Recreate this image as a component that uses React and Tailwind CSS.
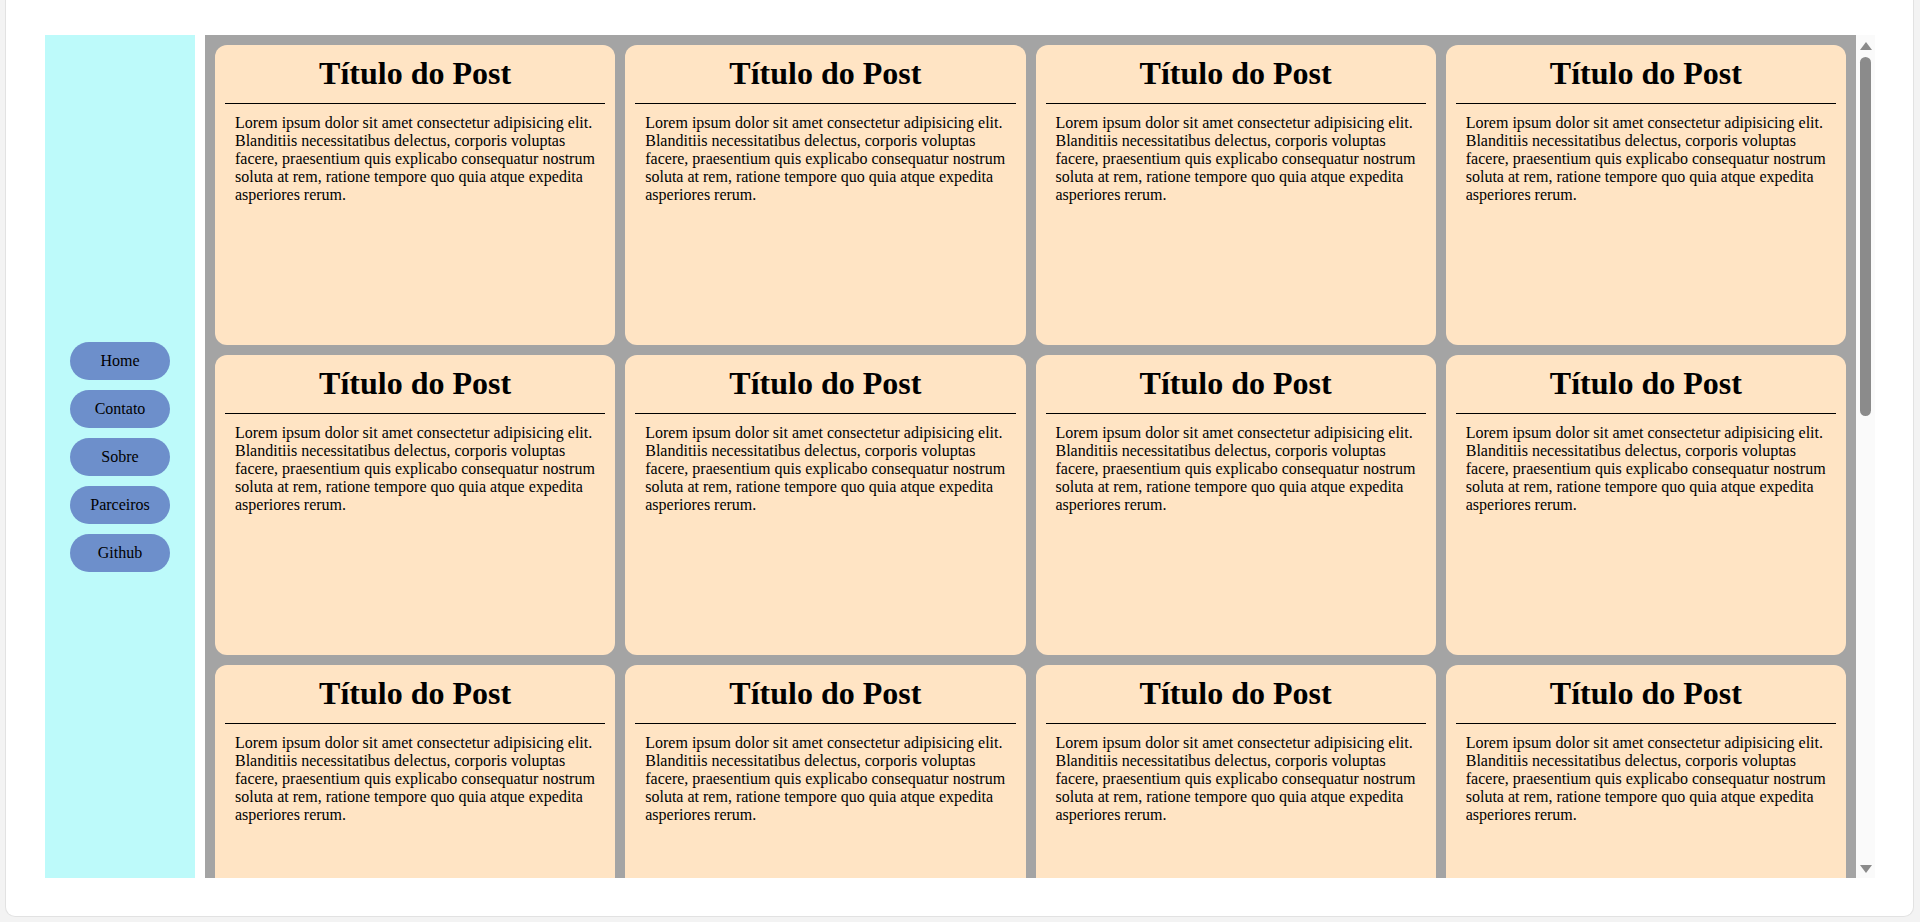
const links = ["Home", "Contato", "Sobre", "Parceiros", "Github"];

// only the rows that show through the scroll window
const posts = Array.from({ length: 12 }, (_, i) => ({
    id: i,
    title: "Título do Post",
    body: "Lorem ipsum dolor sit amet consectetur adipisicing elit. Blanditiis necessitatibus delectus, corporis voluptas facere, praesentium quis explicabo consequatur nostrum soluta at rem, ratione tempore quo quia atque expedita asperiores rerum.",
}));

const Sidebar = () => (
    <aside className="w-[150px] h-[843px] shrink-0 bg-[#bdfafa] flex flex-col items-center justify-center gap-[10px]">
        {links.map((link) => (
            <a key={link} href="#"
                className="w-[100px] h-[38px] rounded-full bg-[#6d8fcb] text-black text-[16px] flex items-center justify-center">
                {link}
            </a>
        ))}
    </aside>
);

const PostCard = ({ post }) => (
    <article className="bg-[#ffe4c4] rounded-[12px] p-[10px] text-black">
        <h1 className="text-[32px] font-bold text-center leading-[normal] pb-[11px] border-b border-black">
            {post.title}
        </h1>
        <p className="mt-[10px] px-[10px] text-[16px] leading-[normal]">{post.body}</p>
    </article>
);

// fake scrollbar, same look as the one in the screenshot
const ScrollBar = () => (
    <div className="w-[19px] shrink-0 bg-[#fafafa] flex flex-col items-center pt-[7px] pb-[5px]">
        <svg width="12" height="8" viewBox="0 0 12 8">
            <polygon points="6,0 12,8 0,8" fill="#8b8b8b" />
        </svg>
        <div className="mt-[7px] w-[11px] h-[359px] rounded-full bg-[#8b8b8b]" />
        <div className="flex-1" />
        <svg width="12" height="8" viewBox="0 0 12 8">
            <polygon points="0,0 12,0 6,8" fill="#8b8b8b" />
        </svg>
    </div>
);

export default function App() {
    return (
        <div className="h-[922px] bg-[#f3f3f3] overflow-hidden font-['Liberation_Serif',serif]">
            <div className="ml-[5px] mr-[6px] h-[917px] bg-white rounded-b-[10px] border border-t-0 border-[#e2e2e2] pl-[39px] pt-[35px] pr-[38px] flex">
                <Sidebar />
                <main className="ml-[10px] h-[843px] flex-1 flex">
                    <div className="flex-1 bg-[#a4a4a4] overflow-hidden p-[10px]">
                        <div className="grid grid-cols-4 auto-rows-[300px] gap-[10px]">
                            {posts.map((post) => (
                                <PostCard key={post.id} post={post} />
                            ))}
                        </div>
                    </div>
                    <ScrollBar />
                </main>
            </div>
        </div>
    );
}
